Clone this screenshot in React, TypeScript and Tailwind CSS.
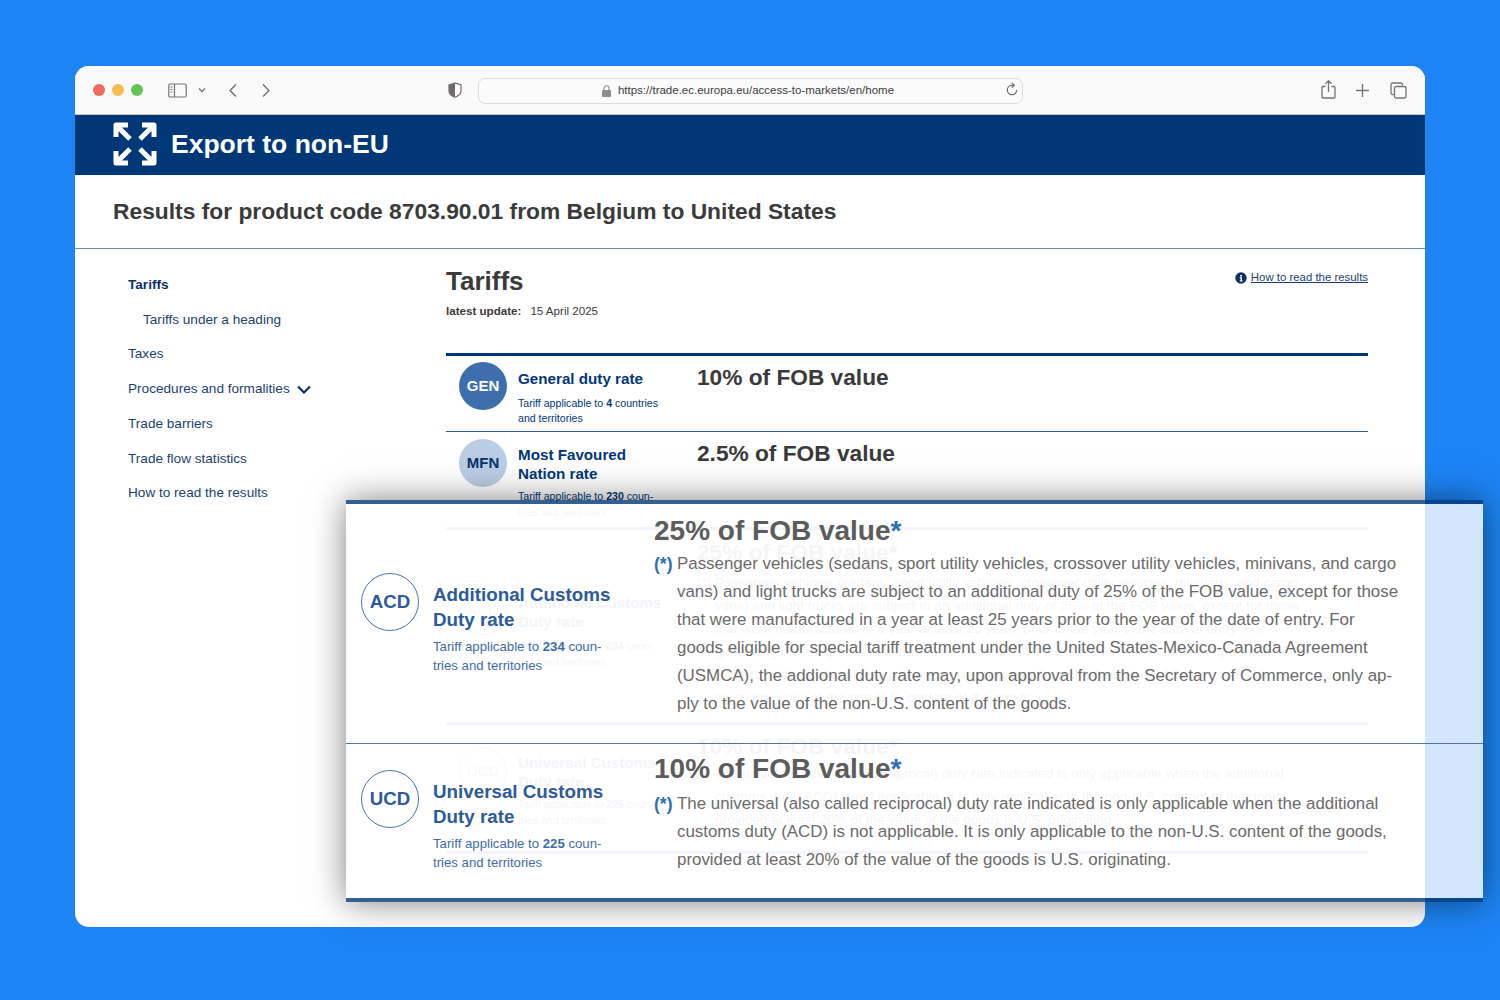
import React from "react";

const sideLinks = [
  { label: "Tariffs", cls: "font-bold text-[#0b2f66]" },
  { label: "Tariffs under a heading", cls: "pl-[15px]" },
  { label: "Taxes", cls: "" },
  { label: "Procedures and formalities", cls: "", chevron: true },
  { label: "Trade barriers", cls: "" },
  { label: "Trade flow statistics", cls: "" },
  { label: "How to read the results", cls: "" },
];

function ExportIcon() {
  return (
    <svg className="mb-[3px]" width="44" height="44" viewBox="0 0 44 44" fill="none" stroke="#fff" strokeWidth="5" strokeLinejoin="round">
      <path d="M3 15V3h12M3 3l14 14" />
      <path d="M29 3h12v12M41 3 27 17" />
      <path d="M3 29v12h12M3 41l14-14" />
      <path d="M41 29v12H29M41 41 27 27" />
    </svg>
  );
}

function Toolbar() {
  return (
    <div className="flex h-[49px] items-center rounded-t-[14px] border-b border-[#c9c9c9] bg-[#fafafa] pl-[18px] pr-[17px] [&>*]:shrink-0">
      <div className="flex gap-[7.5px]">
        <span className="h-[11.5px] w-[11.5px] rounded-full bg-[#ee6a5f]" />
        <span className="h-[11.5px] w-[11.5px] rounded-full bg-[#f5bd4f]" />
        <span className="h-[11.5px] w-[11.5px] rounded-full bg-[#61c454]" />
      </div>
      <svg className="ml-[25px]" width="19" height="15" viewBox="0 0 19 15" fill="none" stroke="#77736f" strokeWidth="1.2">
        <rect x="0.8" y="1" width="17.4" height="13" rx="1.5" />
        <path d="M6.5 1v13M2.5 4h2M2.5 6.5h2M2.5 9h2" />
      </svg>
      <svg className="ml-[11px]" width="8" height="6" viewBox="0 0 8 6" fill="none" stroke="#77736f" strokeWidth="1.3">
        <path d="M1 1.5 4 4.5 7 1.5" />
      </svg>
      <svg className="ml-[22px]" width="10" height="15" viewBox="0 0 10 15" fill="none" stroke="#6f6b68" strokeWidth="1.3">
        <path d="M8 1.5 2 7.5l6 6" />
      </svg>
      <svg className="ml-[23px]" width="10" height="15" viewBox="0 0 10 15" fill="none" stroke="#6f6b68" strokeWidth="1.3">
        <path d="M2 1.5 8 7.5l-6 6" />
      </svg>
      <svg className="ml-[177px]" width="14" height="16" viewBox="0 0 14 16">
        <path d="M7 1 1 3v5.5C1 12 4 14.3 7 15.2 10 14.3 13 12 13 8.5V3Z" fill="#fff" stroke="#6f6b68" strokeWidth="1.2" />
        <path d="M7 1 1 3v5.5C1 12 4 14.3 7 15.2Z" fill="#6f6b68" />
      </svg>
      <div className="relative ml-[16px] mt-[1px] flex h-[26px] w-[545px] items-center justify-center rounded-[7px] border border-[#dedcda] bg-[#fbfbfb] pr-[4px]">
        <svg className="mr-[7px]" width="9" height="12" viewBox="0 0 9 12" fill="#8b8b8b">
          <path d="M1 5h7a1 1 0 0 1 1 1v5a1 1 0 0 1-1 1H1a1 1 0 0 1-1-1V6a1 1 0 0 1 1-1Z" />
          <path d="M2 5V3.3a2.5 2.5 0 0 1 5 0V5" fill="none" stroke="#8b8b8b" strokeWidth="1.1" />
        </svg>
        <span className="mt-[1px] text-[11.5px] text-[#3d3d3d]">https://trade.ec.europa.eu/access-to-markets/en/home</span>
        <svg className="absolute right-[3px] top-[3px]" width="14" height="15" viewBox="0 0 14 15" fill="none" stroke="#6f6b68" strokeWidth="1.2">
          <path d="M11.7 8a4.7 4.7 0 1 1-4.7-4.7h1.5" />
          <path d="M6.8 0.8 9.3 3.3 6.8 5.8" />
        </svg>
      </div>
      <svg className="ml-[298px] mb-[2px]" width="15" height="19" viewBox="0 0 15 19" fill="none" stroke="#77736f" strokeWidth="1.3">
        <path d="M4.5 6.5H2a1 1 0 0 0-1 1V17a1 1 0 0 0 1 1h11a1 1 0 0 0 1-1V7.5a1 1 0 0 0-1-1h-2.5" />
        <path d="M7.5 12V1M4.5 3.8l3-3 3 3" />
      </svg>
      <svg className="ml-[20px]" width="13" height="13" viewBox="0 0 13 13" fill="none" stroke="#77736f" strokeWidth="1.3">
        <path d="M6.5 0v13M0 6.5h13" />
      </svg>
      <svg className="ml-[21px]" width="17" height="17" viewBox="0 0 17 17" fill="none" stroke="#77736f" strokeWidth="1.3">
        <path d="M3.5 12.5H2.5A1.500 1.500 0 0 1 1 11V2.500A1.500 1.500 0 0 1 2.500 1H11a1.500 1.500 0 0 1 1.500 1.500v1" />
        <rect x="4.500" y="4.500" width="11.500" height="11.500" rx="1.500" />
      </svg>
    </div>
  );
}

function Rate({ code, dark }: { code: string; dark?: boolean }) {
  return (
    <div
      className={
        dark
          ? "flex h-[48px] w-[48px] items-center justify-center rounded-full bg-[#3d6fad] text-[15px] font-bold text-white"
          : "flex h-[48px] w-[48px] items-center justify-center rounded-full bg-[#b9cde4] text-[15px] font-bold text-[#0b2f66]"
      }
    >
      {code}
    </div>
  );
}

function GhostRows() {
  return (
    <>
      {/* ACD row, mostly hidden by the overlay card */}
      <div className="grid h-[195px] grid-cols-[72px_179px_1fr] border-b-[3px] border-[#c3d2e6]">
        <div className="ml-[13px] mt-[57px] flex h-[48px] w-[48px] items-center justify-center rounded-full border border-[#3d6fad] text-[15px] text-[#3d6fad] opacity-25">ACD</div>
        <div className="pt-[63px] text-[#003776] opacity-25">
          <div className="text-[15.2px] font-bold leading-[19px]">Additional Customs<br />Duty rate</div>
          <div className="mt-[8px] text-[10.6px] leading-[15.5px]">Tariff applicable to <b>234</b> coun-<br />tries and territories</div>
        </div>
        <div className="pt-[8px] text-[#333] opacity-25">
          <div className="text-[22.7px] font-bold leading-[28px]">25% of FOB value*</div>
          <div className="mt-[5px] flex text-[13.7px] leading-[23px]">
            <span className="w-[18px] text-[#3d6fad]">(*)</span>
            <div className="whitespace-nowrap">
              Passenger vehicles (sedans, sport utility vehicles, crossover utility vehicles, minivans, and cargo<br />
              vans) and light trucks are subject to an additional duty of 25% of the FOB value, except for those<br />
              that were manufactured in a year at least 25 years prior to the year of the date of entry. For<br />
              goods eligible for special tariff treatment under the United States-Mexico-Canada Agreement<br />
              (USMCA), the addional duty rate may, upon approval from the Secretary of Commerce, only ap-<br />
              ply to the value of the non-U.S. content of the goods.
            </div>
          </div>
        </div>
      </div>
      {/* UCD row */}
      <div className="grid h-[129px] grid-cols-[72px_179px_1fr] border-b-[3px] border-[#c3d2e6]">
        <div className="ml-[13px] mt-[22px] flex h-[48px] w-[48px] items-center justify-center rounded-full border border-[#3d6fad] text-[15px] text-[#3d6fad] opacity-25">UCD</div>
        <div className="pt-[28px] text-[#003776] opacity-25">
          <div className="text-[15.2px] font-bold leading-[19px]">Universal Customs<br />Duty rate</div>
          <div className="mt-[6px] text-[10.6px] leading-[15.5px]">Tariff applicable to <b>225</b> coun-<br />tries and territories</div>
        </div>
        <div className="pt-[7px] text-[#333] opacity-25">
          <div className="text-[22.7px] font-bold leading-[28px]">10% of FOB value*</div>
          <div className="mt-[2px] flex text-[13.7px] leading-[23px]">
            <span className="w-[18px] text-[#3d6fad]">(*)</span>
            <div className="whitespace-nowrap">
              The universal (also called reciprocal) duty rate indicated is only applicable when the additional<br />
              customs duty (ACD) is not applicable. It is only applicable to the non-U.S. content of the goods,<br />
              provided at least 20% of the value of the goods is U.S. originating.
            </div>
          </div>
        </div>
      </div>
    </>
  );
}

function OverlayCard() {
  return (
    <div className="absolute left-[271px] top-[434px] h-[402px] w-[1137px] border-y-[4px] border-[#003776]/80 bg-white/80 bg-clip-padding shadow-[0_0_32px_rgba(0,0,0,0.5)]">
      <div className="grid h-[240px] grid-cols-[87px_221px_1fr] border-b-[1.5px] border-[#4a74aa]">
        <div className="ml-[15px] mt-[69px] flex h-[58px] w-[58px] items-center justify-center rounded-full border-[1.5px] border-[#4a74aa] text-[18.7px] font-bold text-[#2d5a98]">ACD</div>
        <div className="pt-[78px]">
          <div className="text-[18.8px] font-bold leading-[25px] text-[#2d5a98]">Additional Customs<br />Duty rate</div>
          <div className="mt-[5px] text-[13.2px] leading-[19px] text-[#3f6ca6]">
            Tariff applicable to <b>234</b> coun-<br />tries and territories
          </div>
        </div>
        <div className="pt-[9px]">
          <div className="text-[28px] font-bold leading-[36px] text-[#5c5c5c]">25% of FOB value<span className="text-[#2f6fb5]">*</span></div>
          <div className="mt-[1px] flex text-[16.9px] leading-[28px] text-[#6a6a6a]">
            <span className="w-[23px] text-[17.5px] font-bold text-[#2f6fb5]">(*)</span>
            <div className="whitespace-nowrap">
              Passenger vehicles (sedans, sport utility vehicles, crossover utility vehicles, minivans, and cargo<br />
              vans) and light trucks are subject to an additional duty of 25% of the FOB value, except for those<br />
              that were manufactured in a year at least 25 years prior to the year of the date of entry. For<br />
              goods eligible for special tariff treatment under the United States-Mexico-Canada Agreement<br />
              (USMCA), the addional duty rate may, upon approval from the Secretary of Commerce, only ap-<br />
              ply to the value of the non-U.S. content of the goods.
            </div>
          </div>
        </div>
      </div>
      <div className="grid grid-cols-[87px_221px_1fr]">
        <div className="ml-[15px] mt-[26px] flex h-[58px] w-[58px] items-center justify-center rounded-full border-[1.5px] border-[#4a74aa] text-[18.7px] font-bold text-[#2d5a98]">UCD</div>
        <div className="pt-[35px]">
          <div className="text-[18.8px] font-bold leading-[25px] text-[#2d5a98]">Universal Customs<br />Duty rate</div>
          <div className="mt-[5px] text-[13.2px] leading-[19px] text-[#3f6ca6]">
            Tariff applicable to <b>225</b> coun-<br />tries and territories
          </div>
        </div>
        <div className="pt-[7px]">
          <div className="text-[28px] font-bold leading-[36px] text-[#5c5c5c]">10% of FOB value<span className="text-[#2f6fb5]">*</span></div>
          <div className="mt-[3px] flex text-[16.9px] leading-[28px] text-[#6a6a6a]">
            <span className="w-[23px] text-[17.5px] font-bold text-[#2f6fb5]">(*)</span>
            <div className="whitespace-nowrap">
              The universal (also called reciprocal) duty rate indicated is only applicable when the additional<br />
              customs duty (ACD) is not applicable. It is only applicable to the non-U.S. content of the goods,<br />
              provided at least 20% of the value of the goods is U.S. originating.
            </div>
          </div>
        </div>
      </div>
    </div>
  );
}

export default function App() {
  return (
    <div className="h-[1000px] w-full overflow-hidden bg-[#1d84f5] px-[75px] pt-[66px] font-['Liberation_Sans',Arial,sans-serif]">
      <div className="relative h-[861px] rounded-[14px] bg-white">
        <Toolbar />

        <div className="flex h-[60px] items-center gap-[14px] bg-[#003776] pl-[38px]">
          <ExportIcon />
          <span className="text-[26.5px] font-bold text-white">Export to non-EU</span>
        </div>

        <div className="flex h-[74px] items-center border-b-[1.5px] border-[#6b8cb3] pl-[38px] text-[22.8px] font-bold text-[#3a3a3a]">
          Results for product code 8703.90.01 from Belgium to United States
        </div>

        <div className="flex">
          <div className="w-[371px] pl-[53px] pt-[19px] text-[13.6px] leading-[34.7px] text-[#1c3f70]">
            {sideLinks.map((l) => (
              <div key={l.label} className={"flex items-center " + l.cls}>
                {l.label}
                {l.chevron && (
                  <svg className="ml-[7px]" width="14" height="9" viewBox="0 0 14 9" fill="none" stroke="#0b2f66" strokeWidth="2.2">
                    <path d="M1 1.5 7 7.5l6-6" />
                  </svg>
                )}
              </div>
            ))}
          </div>

          <div className="w-[922px] pt-[16px]">
            <div className="flex justify-between">
              <h1 className="text-[26px] font-bold leading-[32px] text-[#3a3a3a]">Tariffs</h1>
              <a className="mt-[5px] flex h-[15px] items-center gap-[4px] text-[11.4px] text-[#1c3f70] underline">
                <svg width="12" height="12" viewBox="0 0 12 12">
                  <circle cx="6" cy="6" r="5.7" fill="#0b2f66" />
                  <path d="M5 3h2v1.5H5zM4.7 5.3h2.3v3.2h.6v.9H4.7v-.9h.7V6.2h-.7z" fill="#fff" />
                </svg>
                How to read the results
              </a>
            </div>
            <div className="mt-[6px] flex h-[16px] items-center text-[11.6px] text-[#3a3a3a]">
              <b>latest update:</b>
              <span className="ml-[9px]">15 April 2025</span>
            </div>

            <div className="mt-[34px] border-t-[3.5px] border-[#003776]">
              <div className="grid h-[76px] grid-cols-[72px_179px_1fr] border-b-[1.5px] border-[#2d5a98]">
                <div className="ml-[13px] mt-[6px]"><Rate code="GEN" dark /></div>
                <div className="pt-[13px] text-[#003776]">
                  <div className="text-[15.2px] font-bold leading-[19px]">General duty rate</div>
                  <div className="mt-[8px] text-[10.6px] leading-[15px]">Tariff applicable to <b>4</b> countries<br />and territories</div>
                </div>
                <div className="pt-[7px] text-[22.7px] font-bold leading-[28px] text-[#3a3a3a]">10% of FOB value</div>
              </div>
              <div className="grid h-[98px] grid-cols-[72px_179px_1fr] border-b-[3px] border-[#c3d2e6]">
                <div className="ml-[13px] mt-[7px]"><Rate code="MFN" /></div>
                <div className="pt-[13px] text-[#003776]">
                  <div className="text-[15.2px] font-bold leading-[19px]">Most Favoured<br />Nation rate</div>
                  <div className="mt-[6px] text-[10.6px] leading-[15.5px]">
                    Tariff applicable to <b>230</b> coun-<br />
                    <span className="opacity-25">tries and territories</span>
                  </div>
                </div>
                <div className="pt-[7px] text-[22.7px] font-bold leading-[28px] text-[#3a3a3a]">2.5% of FOB value</div>
              </div>
              <GhostRows />
            </div>
          </div>
        </div>

        <OverlayCard />
      </div>
    </div>
  );
}
